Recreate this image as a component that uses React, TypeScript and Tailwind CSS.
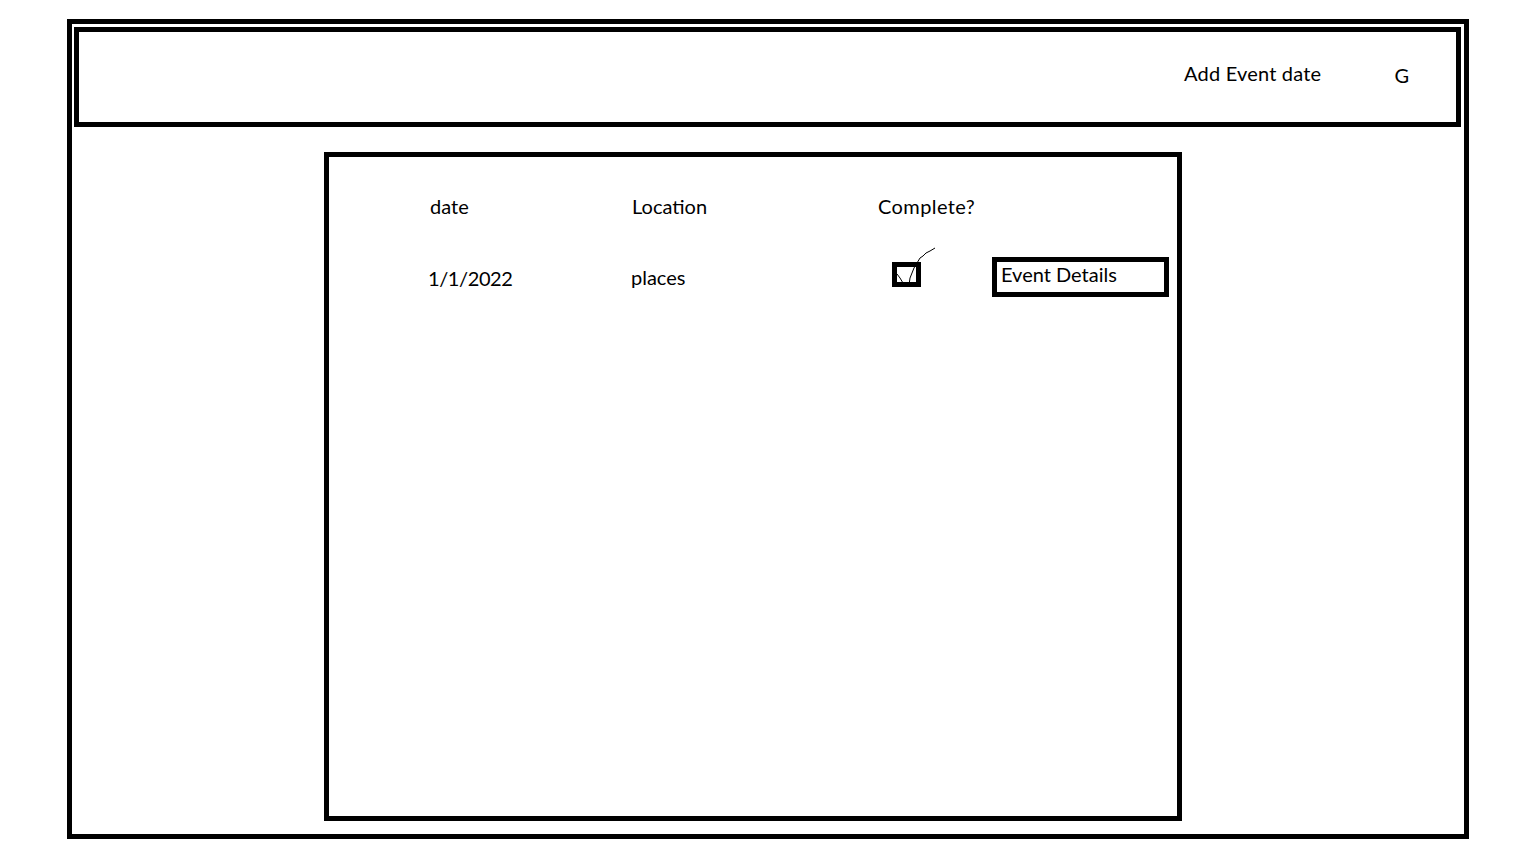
import React from "react";

const font = { fontFamily: "Lato, 'Open Sans', sans-serif" };

// hand-drawn tick that pokes out of the checkbox
const Scribble = () => (
  <svg
    className="absolute left-[-5px] top-[-21px] overflow-visible"
    width="48"
    height="42"
    viewBox="0 -16 48 42"
    fill="none"
    stroke="black"
    strokeWidth="1"
  >
    <polyline points="43,-14 38,-11 34,-9 31,-6 28,-4 25,1 22,6 20,11 18,16 17,23" />
    <polyline points="5,12 8,16 11,21" />
  </svg>
);

const Checkbox = () => (
  <div className="relative w-[29px] h-[25px] border-[5px] border-black mb-[6px] shrink-0">
    <Scribble />
  </div>
);

export default function App() {
  return (
    <div
      className="min-h-screen bg-white pt-[19px] pl-[67px] text-black text-[20px]"
      style={font}
    >
      <div className="w-[1402px] h-[820px] border-[5px] border-black pl-[2px] pt-[3px]">
        {/* top bar */}
        <header className="w-[1387px] h-[100px] border-[5px] border-black flex items-center justify-end pr-[47px]">
          <span className="mb-[9px] tracking-[0.2px]">Add Event date</span>
          <span className="ml-[73px] mb-[4px]">G</span>
        </header>

        {/* events list */}
        <main className="mt-[25px] ml-[250px] w-[858px] h-[669px] border-[5px] border-black pl-[99px] pt-[34px]">
          <div className="flex h-[30px] items-center">
            <span className="ml-[2px] w-[202px]">date</span>
            <span className="w-[246px]">Location</span>
            <span className="tracking-[0.4px]">Complete?</span>
          </div>

          <div className="flex h-[40px] items-center mt-[36px]">
            <span className="w-[203px] mt-[2px] tracking-[-0.4px]">1/1/2022</span>
            <span className="w-[261px]">places</span>
            <Checkbox />
            <button className="ml-[71px] w-[177px] h-[40px] border-[5px] border-black flex items-center pl-[4px] text-[20px]">
              <span className="mb-[7px]">Event Details</span>
            </button>
          </div>
        </main>
      </div>
    </div>
  );
}
